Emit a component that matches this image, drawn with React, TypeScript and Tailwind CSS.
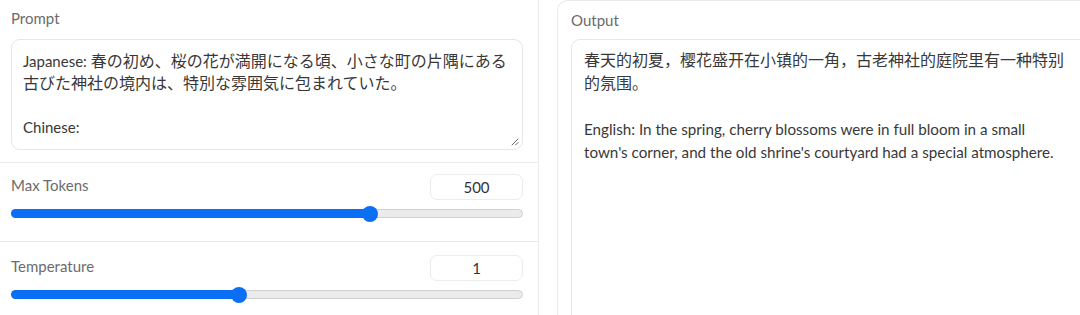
import React from "react";

const font = { fontFamily: 'Lato,"Noto Sans CJK JP",sans-serif' };
const cj = "text-[16px]";

function Slider({ label, value, pct, pt, pb }: { label: string; value: string; pct: number; pt: string; pb: string }) {
  return (
    <div className={`pl-[11px] pr-[15px] ${pt} ${pb}`}>
      <div className="flex items-center justify-between">
        <span className="text-[15px] text-[#6b6b6b] -mt-[3px]">{label}</span>
        <div className="w-[93px] h-[26px] rounded-[7px] border border-[#ececec] flex items-center justify-center text-[15px] text-[#333]">
          {value}
        </div>
      </div>
      <div className="relative mt-[9px] h-[9px] rounded-full bg-[#ebebeb] border border-[#d0d0d0]">
        <div className="absolute left-[-1px] top-[-1px] h-[9px] rounded-full bg-[#0b6ff5]" style={{ width: `${pct * 100}%` }} />
        <div className="absolute top-1/2 w-[16px] h-[16px] -mt-[8px] -ml-[8px] rounded-full bg-[#0b6ff5]" style={{ left: `${pct * 100}%` }} />
      </div>
    </div>
  );
}

export default function App() {
  return (
    <div className="w-[1080px] h-[315px] overflow-hidden bg-white flex" style={font}>
      <div className="w-[539px] shrink-0 border-r border-[#ebebeb] flex flex-col">
        <div className="pl-[11px] pr-[15px] pt-[9px] pb-[12px] border-b border-[#ebebeb]">
          <div className="text-[15px] text-[#6b6b6b] leading-[18px]">Prompt</div>
          <div className="relative mt-[12px] h-[111px] rounded-[9px] border border-[#e6e6e6] px-[11px] pt-[10px] text-[15px] leading-[22px] text-[#383838]">
            <div>
              Japanese: <span className={cj}>春の初め、桜の花が満開になる頃、小さな町の片隅にある</span>
              <br />
              <span className={cj}>古びた神社の境内は、特別な雰囲気に包まれていた。</span>
            </div>
            <div className="h-[22px]" />
            <div>Chinese:</div>
            <svg className="absolute right-[3px] bottom-[3px]" width="9" height="9" viewBox="0 0 9 9">
              <path d="M8 2L2 8M8 5.5L5.5 8" stroke="#666" strokeWidth="1" strokeLinecap="round" />
            </svg>
          </div>
        </div>
        <div className="border-b border-[#ebebeb]">
          <Slider label="Max Tokens" value="500" pct={0.701} pt="pt-[11px]" pb="pb-[23px]" />
        </div>
        <Slider label="Temperature" value="1" pct={0.445} pt="pt-[13px]" pb="pb-[10px]" />
      </div>
      <div className="w-[18px] shrink-0" />
      <div className="flex-1 border-l border-t border-[#ebebeb] rounded-tl-[10px] pl-[13px] pt-[10px]">
        <div className="text-[15px] text-[#6b6b6b] leading-[18px]">Output</div>
        <div className="mt-[10px] h-[300px] rounded-tl-[9px] border-l border-t border-[#e6e6e6] pl-[12px] pt-[9px] text-[15.2px] leading-[22.5px] text-[#383838]">
          <div className={cj}>
            春天的初夏，樱花盛开在小镇的一角，古老神社的庭院里有一种特别
            <br />
            的氛围。
          </div>
          <div className="h-[24px]" />
          <div className="whitespace-nowrap">
            English: In the spring, cherry blossoms were in full bloom in a small
            <br />
            town's corner, and the old shrine's courtyard had a special atmosphere.
          </div>
        </div>
      </div>
    </div>
  );
}
